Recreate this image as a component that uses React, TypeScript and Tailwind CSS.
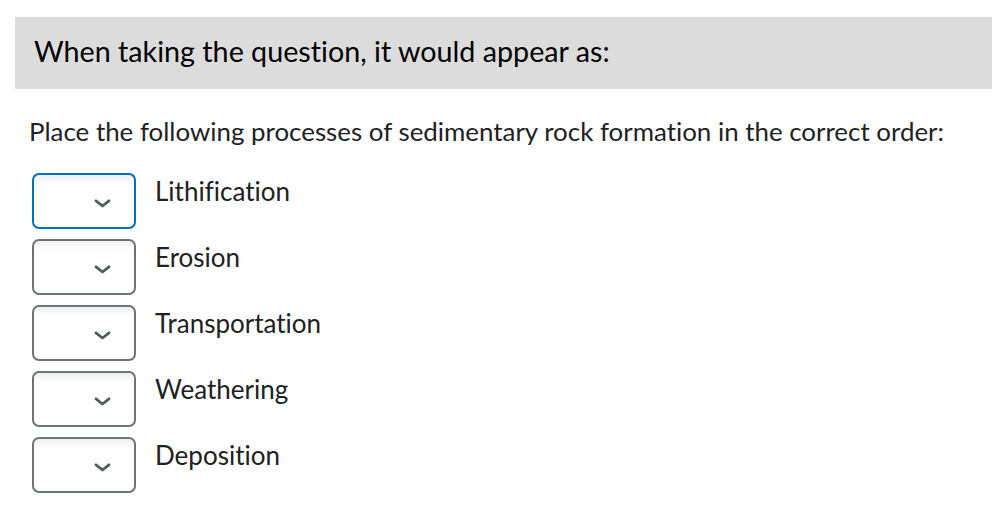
import React from "react";

const items = ["Lithification", "Erosion", "Transportation", "Weathering", "Deposition"];

function Chevron() {
  return (
    <svg width="17" height="9" viewBox="0 0 17 9" className="block">
      <path d="M2 1.8 L8.5 7 L15 1.8" fill="none" stroke="#555a5d" strokeWidth="2.8" strokeLinecap="round" strokeLinejoin="round" />
    </svg>
  );
}

export default function App() {
  return (
    <div
      className="w-[992px] h-[524px] bg-white text-[#202122] overflow-hidden [font-variant-ligatures:none]"
      style={{ fontFamily: "Lato, 'Noto Sans', sans-serif" }}
    >
      <div className="pt-[17px] pl-[15px]">
        <div className="h-[72px] bg-[#dcdcdc] pl-[19px] pt-[20px]">
          <h2 className="text-[28.7px] text-black leading-none">When taking the question, it would appear as:</h2>
        </div>
      </div>
      <div className="pl-[29px] pt-[30px]">
        <p className="text-[25.9px] leading-none">Place the following processes of sedimentary rock formation in the correct order:</p>
        <div className="mt-[28px] pl-[3px] flex flex-col gap-[10px]">
          {items.map((it, i) => (
            <div key={it} className="flex items-start">
              <div
                className={`w-[104px] h-[56px] rounded-[7px] border-2 bg-gradient-to-b from-[#efefef] to-white to-[18%] flex items-center justify-end pr-[23px] pt-[5px] ${
                  i === 0 ? "border-[#006fbf]" : "border-[#6e7376]"
                }`}
              >
                <Chevron />
              </div>
              <span className="ml-[19px] mt-[5px] text-[26px] leading-none">{it}</span>
            </div>
          ))}
        </div>
      </div>
    </div>
  );
}
